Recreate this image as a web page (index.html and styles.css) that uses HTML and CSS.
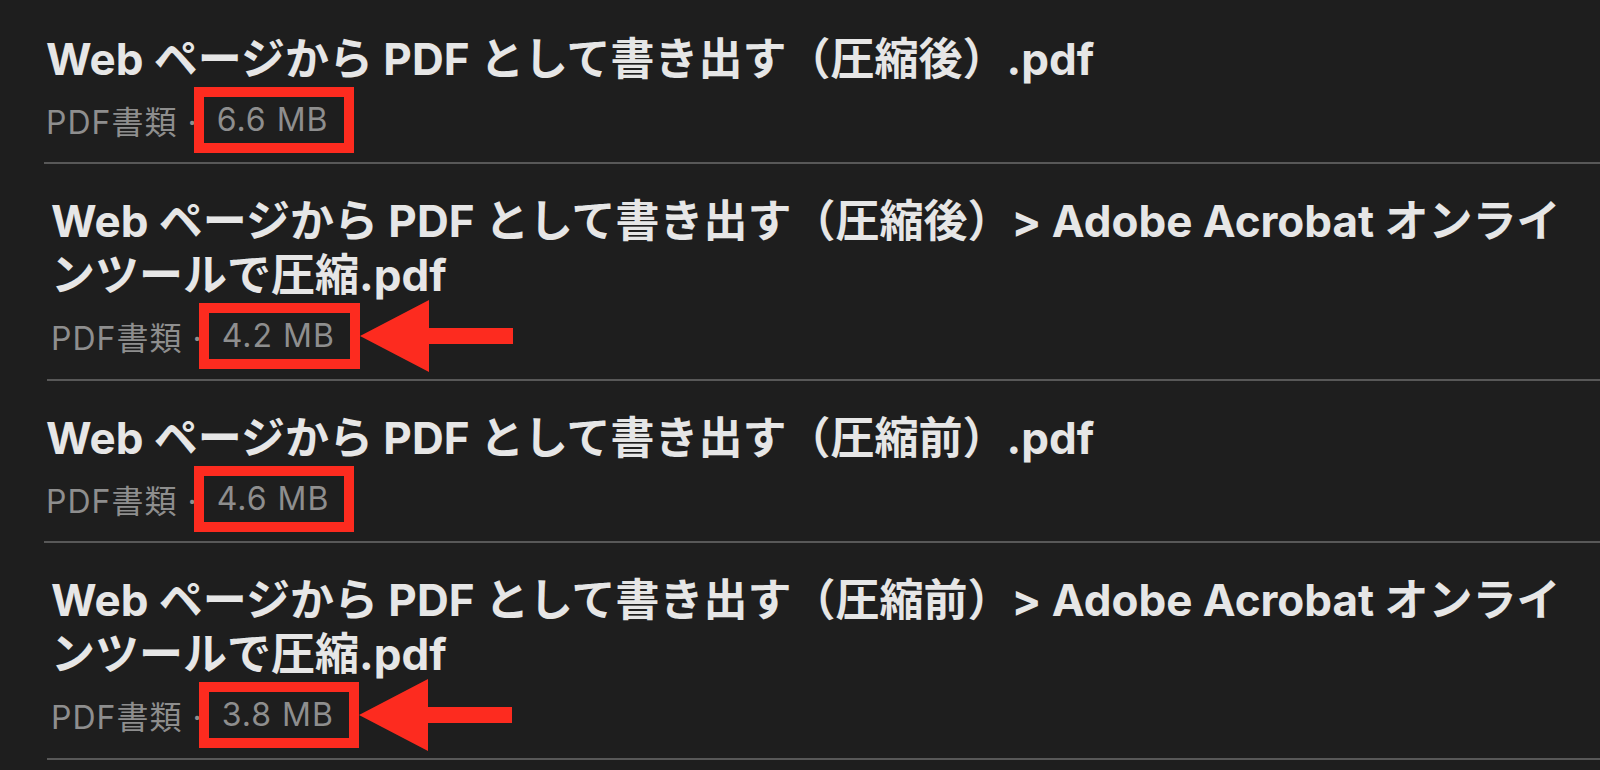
FILE: index.html
```html
<!DOCTYPE html>
<html lang="ja">
<head>
    <meta charset="UTF-8">
    <title>PDF ファイル一覧</title>
    <link rel="stylesheet" href="styles.css">
</head>
<body>

    <ul class="files">
        <li class="file">
            <p class="name">Web ページから PDF として書き出す（圧縮後）.pdf</p>
            <p class="meta">PDF書類 ·<span class="size">6.6 MB</span></p>
        </li>
        <li class="file shifted">
            <p class="name">Web ページから PDF として書き出す（圧縮後）&gt; Adobe Acrobat オンライ<br>ンツールで圧縮.pdf</p>
            <p class="meta">PDF書類 ·<span class="size">4.2 MB</span><svg class="arrow" width="153" height="72" viewBox="0 0 153 72"><polygon points="0,36 69,0 69,28 153,28 153,44 69,44 69,72"/></svg></p>
        </li>
        <li class="file">
            <p class="name">Web ページから PDF として書き出す（圧縮前）.pdf</p>
            <p class="meta">PDF書類 ·<span class="size">4.6 MB</span></p>
        </li>
        <li class="file shifted">
            <p class="name">Web ページから PDF として書き出す（圧縮前）&gt; Adobe Acrobat オンライ<br>ンツールで圧縮.pdf</p>
            <p class="meta">PDF書類 ·<span class="size">3.8 MB</span><svg class="arrow" width="153" height="72" viewBox="0 0 153 72"><polygon points="0,36 69,0 69,28 153,28 153,44 69,44 69,72"/></svg></p>
        </li>
    </ul>

</body>
</html>
```

FILE: styles.css
```css
/* General reset */
* {
    margin: 0;
    padding: 0;
    box-sizing: border-box;
}

body {
    font-family: 'Inter', 'Noto Sans CJK JP', sans-serif;
    background: #1e1e1e;
    color: #e6e6e6;
    padding-top: 2px;
    overflow: hidden;
}

.files {
    list-style: none;
    padding-left: 44px;
}

.file {
    padding: 30px 0 22px 2px;
    border-bottom: 2px solid #585858;
}

/* the screenshot rows 2 and 4 sit a few pixels to the right */
.file.shifted {
    margin-left: 3px;
    padding-left: 4px;
    padding-bottom: 23px;
}

.name {
    font-size: 44px;
    font-weight: 700;
    line-height: 54px;
    white-space: nowrap;
}

.meta {
    display: flex;
    align-items: center;
    height: 40px;
    margin-top: 14px;
    font-size: 32px;
    letter-spacing: 1px;
    color: #8e8e8e;
    white-space: nowrap;
}

/* red highlight around the file size */
.size {
    flex: none;
    height: 66px;
    margin-left: -4px;
    padding: 0 15px 0 13px;
    border: 10px solid #fd2b1f;
    line-height: 46px;
}

.arrow {
    flex: none;
    fill: #fd2b1f;
}
```
